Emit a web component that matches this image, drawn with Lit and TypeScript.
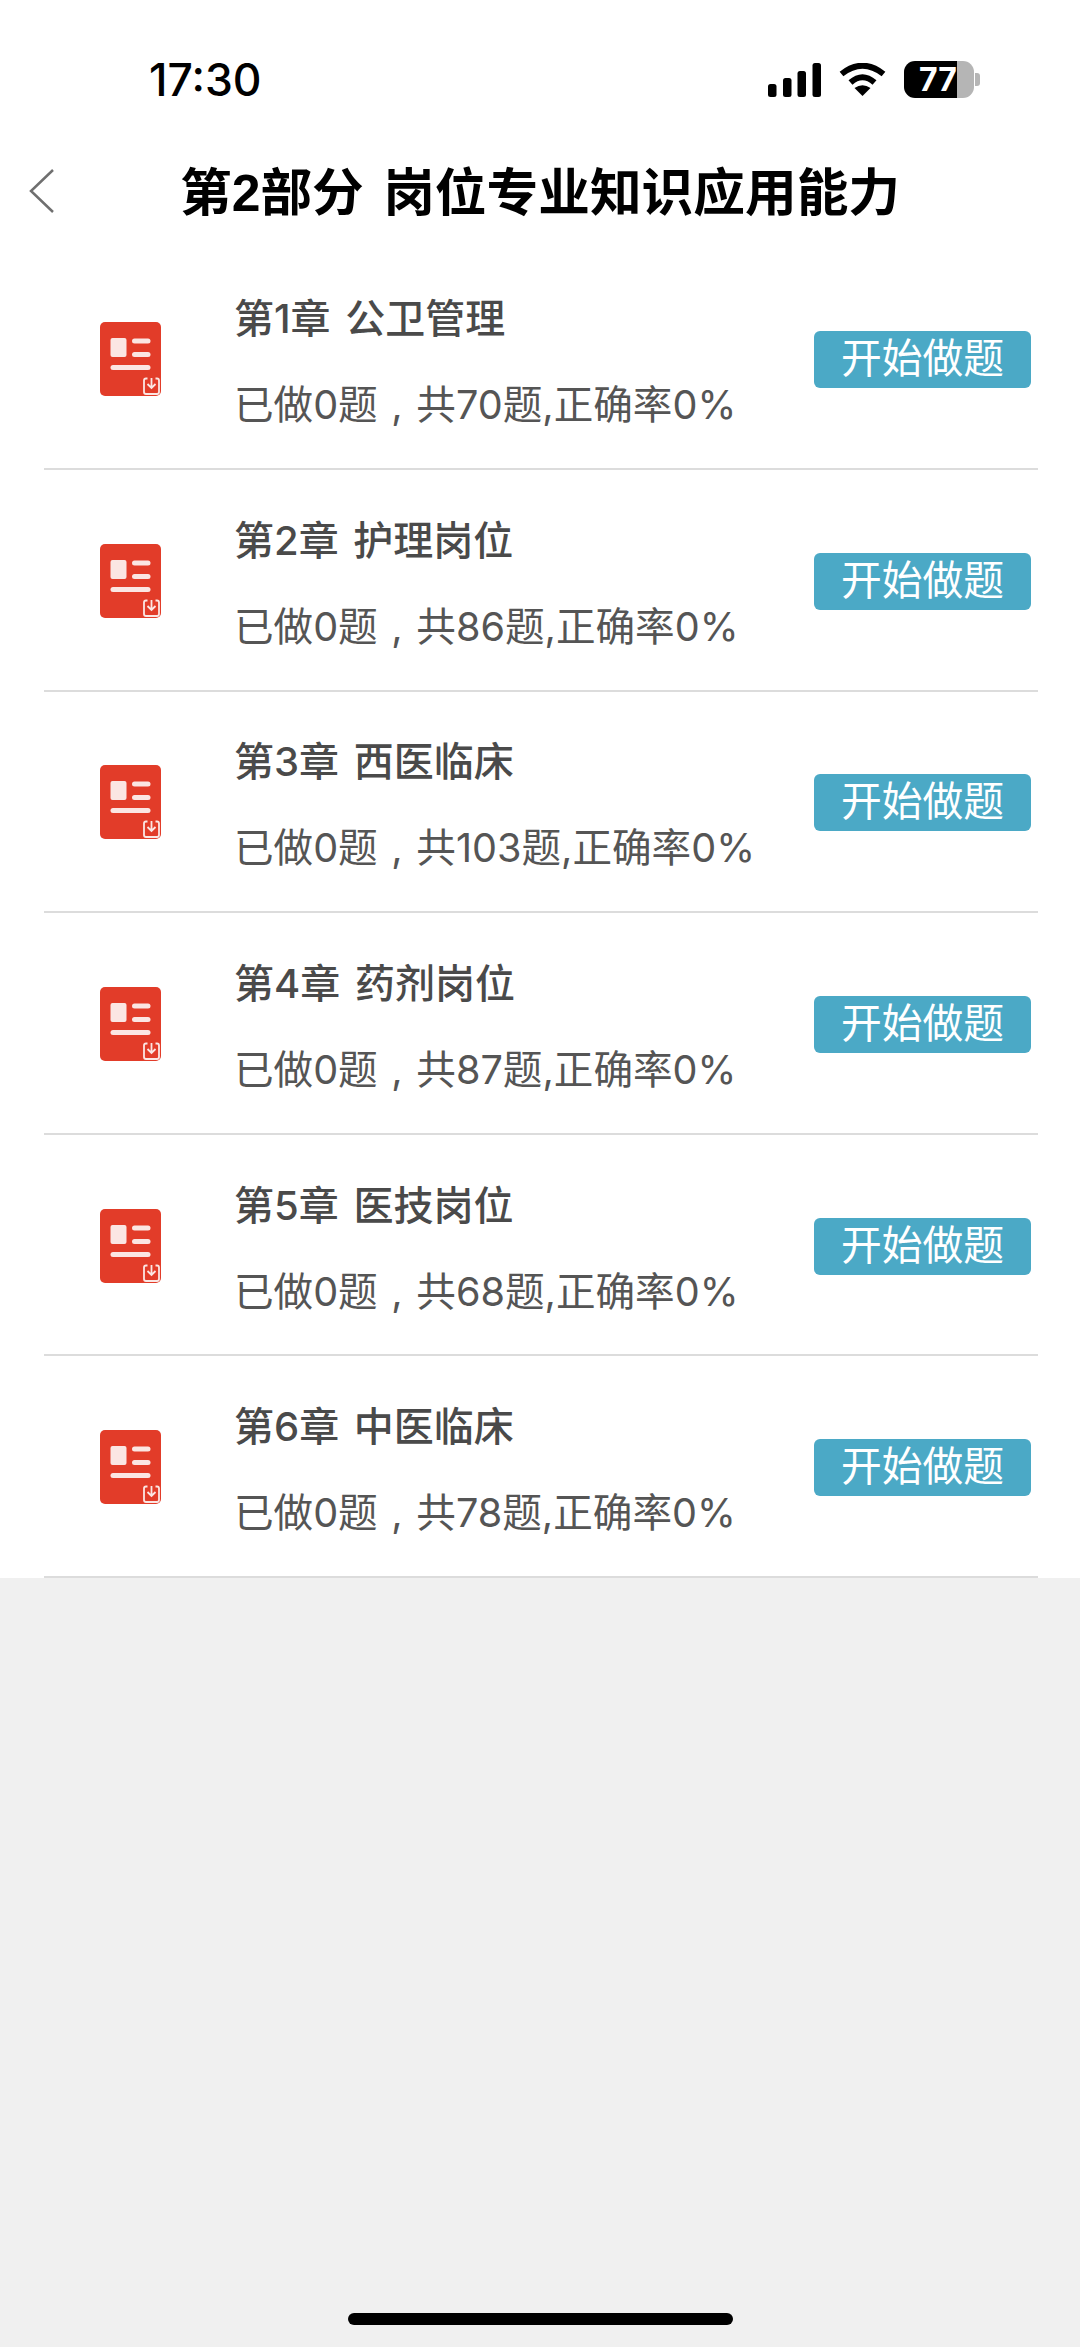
import {LitElement, css, html} from 'lit'
import {customElement} from 'lit/decorators.js'

const chapters = [
    {title: "第1章 公卫管理", total: 70},
    {title: "第2章 护理岗位", total: 86},
    {title: "第3章 西医临床", total: 103},
    {title: "第4章 药剂岗位", total: 87},
    {title: "第5章 医技岗位", total: 68},
    {title: "第6章 中医临床", total: 78},
]

@customElement('app-root')
export class App_Root extends LitElement 
{
    renderIcon()
    {
        return html`<svg class="doc" viewBox="0 0 62 75" width="62" height="75">
            <rect width="61" height="74" rx="5" fill="#e23c29"/>
            <rect x="10.500" y="16" width="16" height="19" rx="2" fill="#fbe6e3"/>
            <rect x="32" y="16.500" width="18.500" height="5" rx="2.500" fill="#fbe6e3"/>
            <rect x="32" y="30" width="18.500" height="5" rx="2.500" fill="#fbe6e3"/>
            <rect x="10.500" y="43" width="40" height="5" rx="2.500" fill="#fbe6e3"/>
            <path d="M47.500 56.500h-1.500a2 2 0 0 0-2 2v11.500a2 2 0 0 0 2 2h11a2 2 0 0 0 2-2v-11.500a2 2 0 0 0-2-2h-1.500" fill="none" stroke="#fbe6e3" stroke-width="1.800"/>
            <path d="M51.500 56v10M47.500 62l4 4 4-4" fill="none" stroke="#fbe6e3" stroke-width="1.800"/>
        </svg>`
    }

    render() 
    {
        return html`
            <div class="page">
                <div class="status">
                    <span class="time">17:30</span>
                    <div class="status-icons">
                        <svg viewBox="0 0 53 34" width="53" height="34">
                            <rect x="0" y="21" width="8.500" height="13" rx="2.500"/>
                            <rect x="15" y="15" width="8.500" height="19" rx="2.500"/>
                            <rect x="29.500" y="8" width="8.500" height="26" rx="2.500"/>
                            <rect x="44.500" y="0" width="8.500" height="34" rx="2.500"/>
                        </svg>
                        <svg viewBox="0 0 47 33" width="47" height="33">
                            <path d="M23.500 33L15.500 25Q23.500 19.500 31.500 25Z"/>
                            <path d="M11.500 19.500Q23.500 9 35.500 19.500" fill="none" stroke="#000" stroke-width="6"/>
                            <path d="M2.500 11Q23.500 -5.500 44.500 11" fill="none" stroke="#000" stroke-width="6"/>
                        </svg>
                        <div class="battery">
                            <div class="battery-body"><span>77</span></div>
                            <div class="battery-tip"></div>
                        </div>
                    </div>
                </div>

                <div class="nav">
                    <svg class="back" viewBox="0 0 26 46" width="26" height="46">
                        <path d="M24 2L2 23l22 21" fill="none" stroke="#6f6f6f" stroke-width="2.500"/>
                    </svg>
                    <span class="nav-title">第2部分 岗位专业知识应用能力</span>
                </div>

                <div class="list">
                    ${chapters.map(c => html`
                        <div class="row">
                            <div class="icon">${this.renderIcon()}</div>
                            <div class="text">
                                <div class="title">${c.title}</div>
                                <div class="sub">已做0题 , 共${c.total}题,正确率0%</div>
                            </div>
                            <div class="btn">开始做题</div>
                        </div>
                    `)}
                </div>

                <div class="rest">
                    <div class="home"></div>
                </div>
            </div>
        `
    }

    static styles = css`
        :host
        {
            display: block;
            font-family: "Liberation Sans", "Noto Sans CJK SC", sans-serif;
        }

        .page
        {
            display: flex;
            flex-direction: column;
            width: 1080px;
            height: 2347px;
            background: #ffffff;
        }

        .status
        {
            box-sizing: border-box;
            height: 136px;
            padding: 52px 100px 0 149px;
            display: flex;
            justify-content: space-between;
            align-items: flex-start;
        }

        .time
        {
            font-family: Inter, sans-serif;
            font-size: 44.500px;
            line-height: 56px;
            font-weight: 500;
            color: #000000;
        }

        .status-icons
        {
            display: flex;
            align-items: center;
            gap: 18px;
            padding-top: 9px;
            height: 37px;
        }

        .battery
        {
            display: flex;
            align-items: center;
            gap: 1px;
        }

        .battery-body
        {
            box-sizing: border-box;
            width: 70px;
            height: 37px;
            padding-left: 15px;
            border-radius: 11px;
            background: linear-gradient(to right, #000000 0 76%, #b5b5b5 76% 100%);
            color: #ffffff;
            font-family: Inter, sans-serif;
            font-size: 32px;
            font-weight: 700;
            line-height: 37px;
        }

        .battery-tip
        {
            width: 5px;
            height: 13px;
            border-radius: 0 3px 3px 0;
            background: #b5b5b5;
        }

        .nav
        {
            height: 112.500px;
            display: flex;
            align-items: center;
            padding-left: 29px;
        }

        .back
        {
            flex: none;
            margin-bottom: 2px;
        }

        .nav-title
        {
            margin-left: 125px;
            margin-bottom: 8px;
            font-size: 51.700px;
            font-weight: 700;
            word-spacing: 5px;
            color: #000000;
            white-space: nowrap;
        }

        .row
        {
            box-sizing: border-box;
            height: 221.600px;
            margin: 0 42px 0 44px;
            border-bottom: 2px solid #dcdcdc;
            display: flex;
            align-items: center;
        }

        .icon
        {
            width: 190px;
            flex: none;
            padding: 3px 0 0 56px;
            box-sizing: border-box;
        }

        .doc
        {
            display: block;
        }

        .text
        {
            flex: 1;
            display: flex;
            flex-direction: column;
            gap: 34px;
            padding-top: 8px;
        }

        .title
        {
            font-family: Inter, "Noto Sans CJK SC", sans-serif;
            font-size: 40px;
            line-height: 52px;
            font-weight: 500;
            word-spacing: 4px;
            color: #4a4a4a;
            white-space: pre;
        }

        .sub
        {
            font-family: Inter, "Noto Sans CJK SC", sans-serif;
            font-size: 39.600px;
            line-height: 52px;
            word-spacing: 2.500px;
            color: #555555;
            white-space: nowrap;
        }

        .btn
        {
            flex: none;
            width: 217px;
            height: 57px;
            margin: 3px 7px 0 0;
            border-radius: 6px;
            background: #4ba9c6;
            color: #ffffff;
            font-size: 40.800px;
            line-height: 57px;
            text-align: center;
        }

        .rest
        {
            flex: 1;
            background: #f0f0f0;
            display: flex;
            flex-direction: column;
            justify-content: flex-end;
            align-items: center;
            padding-bottom: 22px;
        }

        .home
        {
            width: 385px;
            height: 12px;
            border-radius: 6px;
            background: #000000;
        }
    `
}

declare global 
{
    interface HTMLElementTagNameMap 
    {
        'app-root': App_Root
    }
}
